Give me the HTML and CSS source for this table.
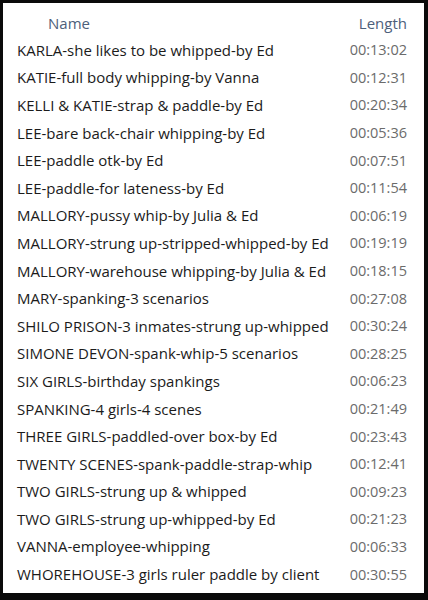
FILE: index.html
```html
<!DOCTYPE html>
<html lang="en">
<head>
    <meta charset="UTF-8">
    <title>Videos</title>
    <link rel="stylesheet" href="styles.css">
</head>
<body>
    <div class="frame">
        <div class="file-list">
            <div class="list-header">
                <span class="col-name">Name</span>
                <span class="col-length">Length</span>
            </div>
            <div class="row"><span class="name">KARLA-she likes to be whipped-by Ed</span><span class="length">00:13:02</span></div>
            <div class="row"><span class="name">KATIE-full body whipping-by Vanna</span><span class="length">00:12:31</span></div>
            <div class="row"><span class="name">KELLI &amp; KATIE-strap &amp; paddle-by Ed</span><span class="length">00:20:34</span></div>
            <div class="row"><span class="name">LEE-bare back-chair whipping-by Ed</span><span class="length">00:05:36</span></div>
            <div class="row"><span class="name">LEE-paddle otk-by Ed</span><span class="length">00:07:51</span></div>
            <div class="row"><span class="name">LEE-paddle-for lateness-by Ed</span><span class="length">00:11:54</span></div>
            <div class="row"><span class="name">MALLORY-pussy whip-by Julia &amp; Ed</span><span class="length">00:06:19</span></div>
            <div class="row"><span class="name">MALLORY-strung up-stripped-whipped-by Ed</span><span class="length">00:19:19</span></div>
            <div class="row"><span class="name">MALLORY-warehouse whipping-by Julia &amp; Ed</span><span class="length">00:18:15</span></div>
            <div class="row"><span class="name">MARY-spanking-3 scenarios</span><span class="length">00:27:08</span></div>
            <div class="row"><span class="name">SHILO PRISON-3 inmates-strung up-whipped</span><span class="length">00:30:24</span></div>
            <div class="row"><span class="name">SIMONE DEVON-spank-whip-5 scenarios</span><span class="length">00:28:25</span></div>
            <div class="row"><span class="name">SIX GIRLS-birthday spankings</span><span class="length">00:06:23</span></div>
            <div class="row"><span class="name">SPANKING-4 girls-4 scenes</span><span class="length">00:21:49</span></div>
            <div class="row"><span class="name">THREE GIRLS-paddled-over box-by Ed</span><span class="length">00:23:43</span></div>
            <div class="row"><span class="name">TWENTY SCENES-spank-paddle-strap-whip</span><span class="length">00:12:41</span></div>
            <div class="row"><span class="name">TWO GIRLS-strung up &amp; whipped</span><span class="length">00:09:23</span></div>
            <div class="row"><span class="name">TWO GIRLS-strung up-whipped-by Ed</span><span class="length">00:21:23</span></div>
            <div class="row"><span class="name">VANNA-employee-whipping</span><span class="length">00:06:33</span></div>
            <div class="row"><span class="name">WHOREHOUSE-3 girls ruler paddle by client</span><span class="length">00:30:55</span></div>
        </div>
    </div>
</body>
</html>
```

FILE: styles.css
```css
/* Basic Reset */
* {
    margin: 0;
    padding: 0;
    box-sizing: border-box;
}

body {
    background-color: #0a0a0a;
    width: 428px;
    height: 600px;
    padding: 3px 4px 7px 3px;
    font-family: "Open Sans", "Liberation Sans", sans-serif;
}

/* White explorer pane */
.frame {
    background-color: #ffffff;
    height: 100%;
    padding: 7px 17px 0 14px;
}

.list-header {
    display: flex;
    justify-content: space-between;
    height: 26px;
    align-items: center;
    color: #4d607b;
    font-size: 15px;
}

.col-name {
    padding-left: 31px;
}

.row {
    display: flex;
    justify-content: space-between;
    align-items: center;
    height: 27.6px;
    font-size: 15px;
}

.name {
    color: #1b1b1b;
}

.length {
    color: #6b6b6b;
    font-size: 14.5px;
}
```
